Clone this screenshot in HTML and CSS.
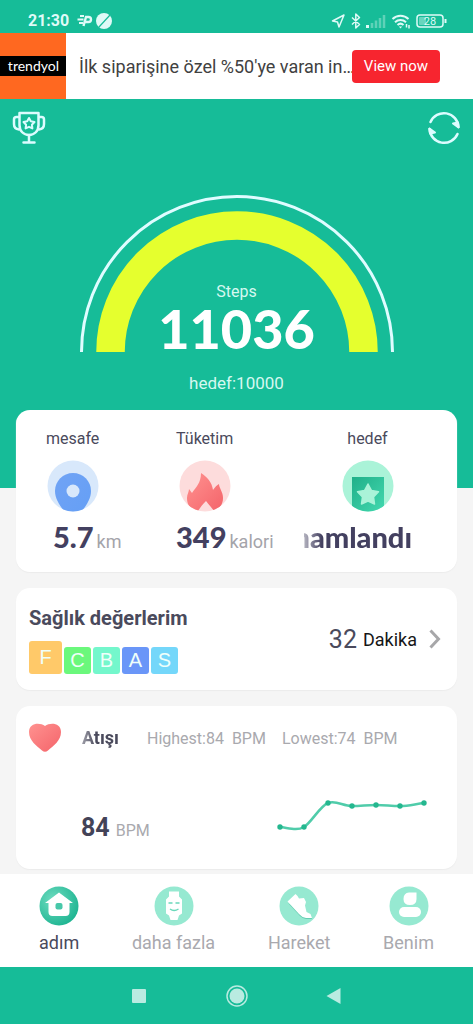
FILE: index.html
```html
<!DOCTYPE html>
<html lang="tr">
<head>
<meta charset="utf-8">
<meta name="viewport" content="width=device-width, initial-scale=1">
<title>Adım</title>
<link rel="stylesheet" href="styles.css">
</head>
<body>
<div class="statusbar">
  <time class="clock">21:30</time>
  <svg class="status-left" width="40" height="18" viewBox="0 0 40 18" fill="none">
    <path d="M4 4h4M1.500 7.500h6M3 11h4" stroke="#dffaf7" stroke-width="2"/>
    <path d="M7.500 14 10 5h2.500a2.200 2.200 0 0 1 0 5H9.500" stroke="#dffaf7" stroke-width="2.400"/>
    <circle cx="28" cy="9" r="8" fill="#dffaf7"/>
    <path d="m22.500 15.500 12-13" stroke="#16bc98" stroke-width="1.200"/>
  </svg>
  <svg class="status-right" width="116" height="18" viewBox="0 0 116 18" fill="none" stroke="#dffaf7" stroke-width="1.500">
    <path d="M1.500 9 13 3 8 15 6.500 10z" stroke-linejoin="round"/>
    <path d="m21 5.500 7.500 7-3.700 3.500V2l3.700 3.500-7.500 7" stroke-linejoin="round"/>
    <path d="M36.500 13v3" stroke-width="3"/>
    <path d="M41 11v5M45 8.500V16M49 6v10M53 3v13" stroke="#5fd2b8" stroke-width="2.500"/>
    <path d="M61.500 7a11.500 11.500 0 0 1 16 0M64 10.200a8 8 0 0 1 11 0M66.500 13a4.500 4.500 0 0 1 6 0" stroke-width="2"/>
    <path d="m67.800 14.500 1.700 2 1.700-2z" fill="#dffaf7" stroke="none"/>
    <path d="M75.500 12v3.500M78 13v3.500"/>
    <rect x="86" y="3" width="26" height="12" rx="3"/>
    <rect x="88" y="5" width="7" height="8" rx="1" fill="#68d5bd" stroke="none"/>
    <path d="M114.500 7v4" stroke-width="2"/>
    <text class="battery-text" x="99" y="13" text-anchor="middle">28</text>
  </svg>
</div>

<section class="ad">
  <div class="ad-logo"><span>trendyol</span></div>
  <p class="ad-text">İlk siparişine özel %50'ye varan in…</p>
  <button class="ad-button" type="button">View now</button>
</section>

<main class="content">
  <div class="toolbar">
    <button class="icon-button" type="button" aria-label="Ödüller">
      <svg width="34" height="34" viewBox="0 0 34 34" fill="none" stroke="#dcfcff" stroke-width="2.500" stroke-linecap="round" stroke-linejoin="round">
        <path d="M7.500 2h19v12c0 6-4 10-9.500 10S7.500 20 7.500 14z"/>
        <path d="M7 6H4.500Q2 6 2 8.500V13q0 5 5 5.500M27 6h2.500Q32 6 32 8.500V13q0 5-5 5.500M17 24v7M11.500 31.500h11"/>
        <path d="m17 7 1.800 3.300 3.700.7-2.600 2.700.5 3.700-3.400-1.600-3.400 1.600.5-3.700-2.600-2.700 3.700-.7z" stroke-width="2"/>
      </svg>
    </button>
    <button class="icon-button" type="button" aria-label="Yenile">
      <svg width="34" height="34" viewBox="0 0 34 34" fill="none" stroke="#dcfcff" stroke-width="2.500" stroke-linecap="round" stroke-linejoin="round">
        <path d="M3.500 11A14.600 14.600 0 0 1 31.500 16M30.500 23A14.600 14.600 0 0 1 2.500 18"/>
        <path d="m26 12.500 5.500 4-.5-5zM8 21.500l-5.500-4 .5 5z" fill="#dcfcff" stroke-width="2"/>
      </svg>
    </button>
  </div>

  <section class="gauge">
    <svg class="gauge-arc" viewBox="0 0 314 157" fill="none">
      <path d="M1.500 157a155.500 155.500 0 0 1 311 0" stroke="#dffcff" stroke-width="3"/>
      <path d="M30.500 157a126.500 126.500 0 0 1 253 0" stroke="#e5ff2e" stroke-width="28.500"/>
    </svg>
    <div class="gauge-text">
      <span class="gauge-label">Steps</span>
      <strong class="gauge-value">11036</strong>
    </div>
  </section>
  <p class="goal">hedef:10000</p>

  <section class="card stats">
    <div class="stat">
      <div class="stat-head">
        <span>mesafe</span>
        <svg width="52" height="52" viewBox="0 0 52 52">
          <defs>
            <clipPath id="disc"><circle cx="26" cy="26" r="25.500"/></clipPath>
            <linearGradient id="blue" x1="0" y1="0" x2="1" y2="1"><stop stop-color="#70a3f5"/><stop offset="1" stop-color="#659ff5"/></linearGradient>
            <linearGradient id="red" x1="0" y1="0" x2="1" y2="1"><stop stop-color="#ff9290"/><stop offset="1" stop-color="#f4646a"/></linearGradient>
            <linearGradient id="green" x1="0" y1="0" x2="1" y2="1"><stop stop-color="#20af89"/><stop offset="1" stop-color="#43d9af"/></linearGradient>
          </defs>
          <circle cx="26" cy="26" r="25.500" fill="#d8e8fb"/>
          <path clip-path="url(#disc)" d="M26 13c10 0 18 8 18 18 0 8-5 15-10 21H18C13 46 8 39 8 31c0-10 8-18 18-18z" fill="url(#blue)"/>
          <circle cx="26" cy="31" r="6.500" fill="#d8e8fb"/>
        </svg>
      </div>
      <p class="stat-value indent"><strong>5.7</strong><span>km</span></p>
    </div>
    <div class="stat">
      <div class="stat-head">
        <span>Tüketim</span>
        <svg width="52" height="52" viewBox="0 0 52 52">
          <circle cx="26" cy="26" r="25.500" fill="#fddcdc"/>
          <path clip-path="url(#disc)" d="M22 13c6 4 11 9 12 17 2-3 4-5 6-6 0 4 4 8 4 14 0 7-4 11-9 13-2-3-4-5-8-10-4 4-6 7-8 10-8-2-11-6-11-13 0-4 2-6 2-9l3 4c4-6 9-10 9-20z" fill="url(#red)"/>
        </svg>
      </div>
      <p class="stat-value"><strong>349</strong><span>kalori</span></p>
    </div>
    <div class="stat">
      <div class="stat-head wide">
        <span>hedef</span>
        <svg width="52" height="52" viewBox="0 0 52 52">
          <circle cx="26" cy="26" r="25.500" fill="#aaf3d8"/>
          <path clip-path="url(#disc)" d="M10 17h32v35H10z" fill="url(#green)"/>
          <path d="m26 24 3.500 6.500 7 1.200-5 5.200 1 7.100-6.500-3-6.500 3 1-7.100-5-5.200 7-1.200z" fill="#aaf3d8" stroke="#aaf3d8" stroke-width="1.500" stroke-linejoin="round"/>
        </svg>
      </div>
      <p class="marquee goal-state"><strong>Tamamlandı</strong></p>
    </div>
  </section>

  <section class="card health">
    <div>
      <h2 class="title">Sağlık değerlerim</h2>
      <div class="badges">
        <span class="badge badge-f">F</span>
        <span class="badge badge-c">C</span>
        <span class="badge badge-b">B</span>
        <span class="badge badge-a">A</span>
        <span class="badge badge-s">S</span>
      </div>
    </div>
    <a class="duration" href="#saglik">
      <span class="duration-number">32</span>
      <span>Dakika</span>
      <svg width="12" height="20" viewBox="0 0 12 20" fill="none" stroke="#a7a7a9" stroke-width="3"><path d="m1.500 1.500 8 8.500-8 8.500"/></svg>
    </a>
  </section>

  <section class="card heart">
    <div class="heart-head">
      <svg width="34" height="30" viewBox="0 0 34 30"><path d="M17 3C22-1 33-.5 33 9c0 9-8 14-13 18.500q-3 2.500-6 0C9 23 1 18 1 9 1-.5 12-1 17 3z" fill="url(#red)"/></svg>
      <h2 class="marquee heart-title"><span>Kalp Atışı</span></h2>
      <span class="range">Highest:84&nbsp; BPM</span>
      <span class="range">Lowest:74&nbsp; BPM</span>
    </div>
    <div class="heart-body">
      <p class="bpm"><strong>84</strong><span>BPM</span></p>
      <svg class="chart" width="152" height="36" viewBox="0 0 152 36" fill="none">
        <path d="M4 29c9 1 17 4 24 0S44 8 52 5s15 3 24 3 15-1 24-1 15 1 24 1 15-2 24-3" stroke="#50ccaa" stroke-width="2.500"/>
        <g fill="#24b78f"><circle cx="4" cy="29" r="2.700"/><circle cx="28" cy="29" r="2.700"/><circle cx="52" cy="5" r="2.700"/><circle cx="76" cy="8" r="2.700"/><circle cx="100" cy="7" r="2.700"/><circle cx="124" cy="8" r="2.700"/><circle cx="148" cy="5" r="2.700"/></g>
      </svg>
    </div>
  </section>
</main>

<nav class="tabs">
  <a class="tab active" href="#adim">
    <svg width="40" height="40" viewBox="0 0 40 40">
      <defs><radialGradient id="home" cx=".35" cy=".35" r=".7"><stop stop-color="#6fdcc0"/><stop offset="1" stop-color="#1fb592"/></radialGradient></defs>
      <circle cx="20" cy="20" r="19.500" fill="url(#home)"/>
      <path d="M20 6.500 34 17h-3.500v9q0 4-4 4h-13q-4 0-4-4v-9H6z" fill="#fff"/>
      <rect x="16.500" y="17" width="7" height="6.500" rx="2" fill="#47c8a9"/>
    </svg>
    <span>adım</span>
  </a>
  <a class="tab" href="#daha">
    <svg width="40" height="40" viewBox="0 0 40 40">
      <circle cx="20" cy="20" r="19.500" fill="#96e9d1"/>
      <path d="M15 5.500h10v5l3 3v14l-3 2-1.500 4.500h-7L15 29.500l-3-2v-14l3-3z" fill="#fff"/>
      <path d="M14.500 17h4M21.500 17h4M16 23q4 3 8.500 0" fill="none" stroke="#69d8ba" stroke-width="1.300"/>
    </svg>
    <span>daha fazla</span>
  </a>
  <a class="tab" href="#hareket">
    <svg width="40" height="40" viewBox="0 0 40 40">
      <circle cx="20" cy="20" r="19.500" fill="#96e9d1"/>
      <path d="m9 17 12 13q3 3 6 3h6l-1-3z" fill="#65cdb2"/>
      <path d="m8.500 15.500 8-7.500 2 2 1.500 2.500 5-.5 2 4-1 3.500 1.500 6.500 4 2 1.500 4H27q-4-.5-7-4z" fill="#fff"/>
    </svg>
    <span>Hareket</span>
  </a>
  <a class="tab" href="#benim">
    <svg width="40" height="40" viewBox="0 0 40 40">
      <circle cx="20" cy="20" r="19.500" fill="#96e9d1"/>
      <path d="M20 6.500h7.500V13q0 6-6.500 6t-6.500-6 5.500-6.500z" fill="#fff"/>
      <rect x="10" y="21" width="22" height="10" rx="5" fill="#fff"/>
    </svg>
    <span>Benim</span>
  </a>
</nav>

<div class="system-nav">
  <button class="icon-button" type="button" aria-label="Son uygulamalar"><svg width="24" height="24" viewBox="0 0 24 24"><rect x="5" y="5" width="14" height="14" rx="1" fill="#b9ebe1"/></svg></button>
  <button class="icon-button" type="button" aria-label="Ana ekran"><svg width="24" height="24" viewBox="0 0 24 24"><circle cx="12" cy="12" r="10" fill="none" stroke="#b9ebe1" stroke-width="1.500"/><circle cx="12" cy="12" r="7.500" fill="#b9ebe1"/></svg></button>
  <button class="icon-button" type="button" aria-label="Geri"><svg width="24" height="24" viewBox="0 0 24 24"><path d="M17.500 4v16L3.500 12z" fill="#b9ebe1"/></svg></button>
</div>
</body>
</html>
```

FILE: styles.css
```css
* {
  box-sizing: border-box;
}

body {
  margin: 0;
  min-height: 100vh;
  display: flex;
  flex-direction: column;
  background: #f5f5f5;
  color: #4a4a5c;
  font-family: Roboto, "Noto Sans", sans-serif;
}

p,
h2 {
  margin: 0;
}

svg {
  display: block;
  flex: none;
}

a {
  color: inherit;
  text-decoration: none;
}

button {
  font-family: inherit;
  border: 0;
  padding: 0;
  cursor: pointer;
}

.icon-button {
  background: none;
}

.statusbar {
  display: flex;
  align-items: center;
  height: 33px;
  padding: 8px 26px 0 28px;
  background: #16bc98;
  color: #dffaf7;
}

.clock {
  font-size: 16px;
  font-weight: 700;
}

.status-left {
  margin-left: 7px;
}

.status-right {
  margin-left: auto;
}

.battery-text {
  fill: #dffaf7;
  stroke: none;
  font-size: 11px;
}

.ad {
  display: flex;
  align-items: center;
  height: 66px;
  padding-right: 33px;
  background: #fff;
}

.ad-logo {
  display: flex;
  align-items: center;
  flex: none;
  width: 66px;
  height: 66px;
  background: #ff6820;
}

.ad-logo span {
  flex: 1;
  padding-right: 7px;
  background: #000;
  color: #fff;
  font-family: Lato, sans-serif;
  font-size: 14px;
  line-height: 20px;
  text-align: right;
}

.ad-text {
  flex: 1;
  min-width: 0;
  padding-left: 13px;
  color: #414141;
  font-size: 18px;
  white-space: nowrap;
}

.ad-button {
  flex: none;
  width: 88px;
  height: 33px;
  border-radius: 4px;
  background: #f7252f;
  color: #fff;
  font-size: 15px;
}

.content {
  flex: 1;
  display: flex;
  flex-direction: column;
  padding: 0 16px 4px;
  background: linear-gradient(#16bc98 389px, #f5f5f5 389px);
}

.toolbar {
  display: flex;
  justify-content: space-between;
  margin: 0 -4px;
  padding-top: 12px;
}

.gauge {
  display: grid;
  justify-items: center;
  padding-top: 50px;
}

.gauge-arc {
  grid-area: 1 / 1;
  width: 314px;
}

.gauge-text {
  grid-area: 1 / 1;
  align-self: end;
  display: flex;
  flex-direction: column;
  align-items: center;
  gap: 4px;
}

.gauge-label {
  color: #d5f8f0;
  font-size: 16px;
  line-height: 20px;
}

.gauge-value {
  color: #fff;
  font-family: Lato, sans-serif;
  font-size: 54px;
  font-weight: 900;
  line-height: 46px;
}

.goal {
  padding: 20px 0 16px;
  color: #d5f8f0;
  font-size: 17px;
  line-height: 22px;
  text-align: center;
}

.card {
  border-radius: 14px;
  background: #fff;
  box-shadow: 0 1px 1px #ececec;
}

.stats {
  display: grid;
  grid-template-columns: 130fr 128fr 127fr;
  min-height: 162px;
  padding: 18px 26px 0 30px;
}

.stat-head {
  display: inline-flex;
  flex-direction: column;
  align-items: center;
  gap: 10px;
  font-size: 16px;
  line-height: 22px;
}

.stat-head.wide {
  display: flex;
}

.stat-value {
  display: flex;
  align-items: baseline;
  gap: 3px;
  margin-top: 8px;
  color: #a4a4aa;
  font-size: 18px;
  line-height: 34px;
}

.stat-value.indent {
  padding-left: 7px;
}

.stat-value strong,
.goal-state {
  color: #434060;
  font-family: Lato, sans-serif;
  font-size: 29px;
  font-weight: 900;
}

.marquee {
  display: flex;
  justify-content: flex-end;
  overflow: hidden;
  white-space: nowrap;
  -webkit-mask-image: linear-gradient(90deg, rgba(0, 0, 0, 0.4), #000 18px);
  mask-image: linear-gradient(90deg, rgba(0, 0, 0, 0.4), #000 18px);
}

.goal-state {
  width: 108px;
  margin-top: 8px;
  line-height: 34px;
}

.goal-state strong {
  font-weight: 900;
}

.health {
  display: flex;
  align-items: center;
  justify-content: space-between;
  margin-top: 16px;
  min-height: 102px;
  padding: 0 16px 0 13px;
}

.title {
  font-size: 20px;
  font-weight: 700;
  line-height: 26px;
}

.badges {
  display: flex;
  align-items: flex-end;
  gap: 2px;
  margin-top: 10px;
}

.badge {
  width: 27px;
  border-radius: 3px;
  color: #effffa;
  font-family: "Liberation Sans", sans-serif;
  font-size: 20px;
  line-height: 27px;
  text-align: center;
}

.badge-f {
  width: 33px;
  line-height: 33px;
  background: #ffc969;
}

.badge-c {
  background: #6bf87c;
}

.badge-b {
  background: #74f7cc;
}

.badge-a {
  background: #6a96f8;
}

.badge-s {
  background: #74d7fa;
}

.duration {
  display: flex;
  align-items: center;
  gap: 6px;
  color: #161616;
  font-size: 18px;
}

.duration svg {
  margin-left: 6px;
}

.duration-number {
  color: #4a4a5c;
  font-size: 25px;
}

.heart {
  margin-top: 16px;
  min-height: 163px;
  padding: 17px 28px 0 12px;
}

.heart-head {
  display: flex;
  align-items: center;
}

.heart-title {
  width: 41px;
  margin: 0 28px 0 16px;
  font-size: 18px;
  line-height: 26px;
}

.range {
  margin-right: 16px;
  color: #a9a9ae;
  font-size: 16px;
  white-space: nowrap;
}

.heart-body {
  display: flex;
  justify-content: space-between;
  align-items: flex-start;
  padding: 45px 1px 0 53px;
}

.bpm {
  display: flex;
  align-items: baseline;
  gap: 6px;
  padding-top: 14px;
  color: #a9a9ae;
  font-size: 16px;
  line-height: 32px;
}

.bpm strong {
  color: #434357;
  font-size: 25px;
}

.tabs {
  display: flex;
  justify-content: space-between;
  height: 93px;
  padding: 12px 39px 0 39px;
  background: #fff;
}

.tab {
  display: flex;
  flex-direction: column;
  align-items: center;
  gap: 5px;
  color: #a9a9ae;
  font-size: 18px;
  line-height: 24px;
}

.tab.active {
  color: #4a4a5c;
}

.system-nav {
  display: flex;
  align-items: center;
  justify-content: center;
  gap: 74px;
  height: 57px;
  background: #16bc98;
}
```
